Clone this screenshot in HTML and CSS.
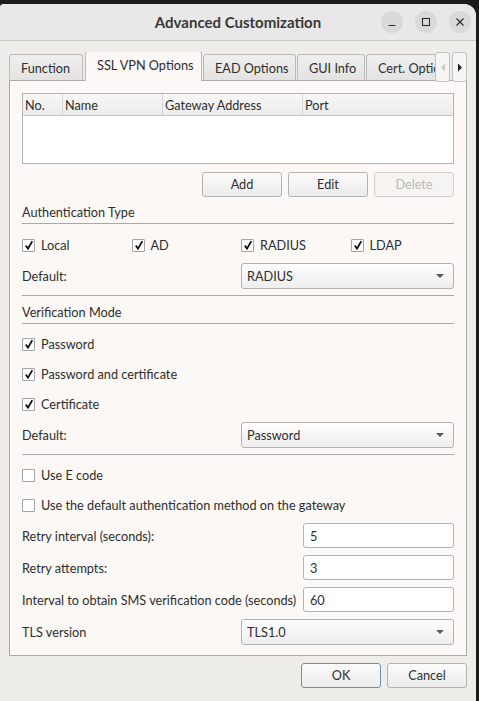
FILE: index.html
```html
<!DOCTYPE html>
<html lang="en">
<head>
    <meta charset="UTF-8">
    <title>Advanced Customization</title>
    <link rel="stylesheet" href="styles.css">
</head>
<body>
    <div class="window">
        <div class="titlebar">
            <span class="title">Advanced Customization</span>
            <div class="wbtns">
                <span class="wbtn"><svg width="10" height="10" viewBox="0 0 10 10"><path d="M1.5 8.5h7" stroke="#2e2e2e" stroke-width="1.2"/></svg></span>
                <span class="wbtn"><svg width="10" height="10" viewBox="0 0 10 10"><rect x="1.5" y="1.5" width="7" height="7" fill="none" stroke="#2e2e2e" stroke-width="1.1"/></svg></span>
                <span class="wbtn"><svg width="10" height="10" viewBox="0 0 10 10"><path d="M1.5 1.5l7 7M8.5 1.5l-7 7" stroke="#2e2e2e" stroke-width="1.2"/></svg></span>
            </div>
        </div>
        <div class="content">
            <div class="tabbar">
                <div class="tabs">
                    <span class="tab">Function</span>
                    <span class="tab active">SSL VPN Options</span>
                    <span class="tab">EAD Options</span>
                    <span class="tab">GUI Info</span>
                    <span class="tab">Cert. Options</span>
                </div>
                <div class="scroller">
                    <span class="sbtn"><svg width="6" height="9" viewBox="0 0 6 9"><path d="M5 0.5v8L1 4.5z" fill="#c8c8c8"/></svg></span>
                    <span class="sbtn"><svg width="6" height="9" viewBox="0 0 6 9"><path d="M1 0.5v8l4-4z" fill="#1e1e1e"/></svg></span>
                </div>
            </div>
            <div class="pane">
                <div class="table">
                    <div class="thead">
                        <span class="c1">No.</span>
                        <span class="c2">Name</span>
                        <span class="c3">Gateway Address</span>
                        <span class="c4">Port</span>
                    </div>
                    <div class="tbody"></div>
                </div>
                <div class="btnrow">
                    <span class="btn">Add</span>
                    <span class="btn">Edit</span>
                    <span class="btn disabled">Delete</span>
                </div>

                <div class="heading">Authentication Type</div>
                <div class="checkgrid">
                    <label class="chk"><span class="box on"></span>Local</label>
                    <label class="chk"><span class="box on"></span>AD</label>
                    <label class="chk"><span class="box on"></span>RADIUS</label>
                    <label class="chk"><span class="box on"></span>LDAP</label>
                </div>
                <div class="row2">
                    <span>Default:</span>
                    <span class="combo">RADIUS</span>
                </div>

                <div class="heading second">Verification Mode</div>
                <div class="checklist">
                    <label class="chk"><span class="box on"></span>Password</label>
                    <label class="chk"><span class="box on"></span>Password and certificate</label>
                    <label class="chk"><span class="box on"></span>Certificate</label>
                </div>
                <div class="row2">
                    <span>Default:</span>
                    <span class="combo">Password</span>
                </div>

                <div class="checklist">
                    <label class="chk"><span class="box"></span>Use E code</label>
                    <label class="chk"><span class="box"></span>Use the default authentication method on the gateway</label>
                </div>
                <div class="fields">
                    <div class="field"><span>Retry interval (seconds):</span><span class="input">5</span></div>
                    <div class="field"><span>Retry attempts:</span><span class="input">3</span></div>
                    <div class="field"><span>Interval to obtain SMS verification code (seconds)</span><span class="input">60</span></div>
                    <div class="row2 last">
                        <span>TLS version</span>
                        <span class="combo">TLS1.0</span>
                    </div>
                </div>
            </div>
            <div class="footer">
                <span class="btn default">OK</span>
                <span class="btn">Cancel</span>
            </div>
        </div>
    </div>
</body>
</html>
```

FILE: styles.css
```css
body{
    margin: 0;
    background: #1b1b1b;
    font-family: Lato, "Noto Sans", sans-serif;
    font-size: 12.7px;
    color: #2e2e2e;
}
.window{
    margin: 4px 3px 0 0;
    height: 697px;
    background: #efedea;
    border-radius: 4px 12px 0 0;
    overflow: hidden;
}
.titlebar{
    height: 36px;
    background: #e8e8e8;
    border-bottom: 1px solid #c9c9c9;
    position: relative;
    display: flex;
    align-items: center;
    justify-content: center;
}
.title{
    font-weight: bold;
    font-size: 15px;
    color: #383838;
}
.wbtns{
    position: absolute;
    right: 5px;
    top: 7px;
    display: flex;
    gap: 12px;
}
.wbtn{
    width: 22px;
    height: 22px;
    border-radius: 50%;
    background: #d9d9d9;
    display: flex;
    align-items: center;
    justify-content: center;
}

.content{
    padding: 11px 9px 0 9px;
}
/* tabs */
.tabbar{
    height: 28px;
    position: relative;
}
.tabs{
    display: flex;
    align-items: flex-end;
    height: 29px;
    width: 427px;
    overflow: hidden;
    position: relative;
    z-index: 1;
}
.tab{
    flex: none;
    height: 25px;
    line-height: 26px;
    padding: 0 11px;
    margin-right: 1px;
    margin-bottom: 1px;
    border: 1px solid #bdbbb8;
    border-bottom: none;
    border-radius: 3px 3px 0 0;
    background: linear-gradient(#efefef, #e3e3e3);
    white-space: nowrap;
}
.tab:first-child{ width: 50px; }
.tab.active{
    height: 29px;
    line-height: 27px;
    margin-bottom: 0;
    margin-left: 1px;
    background: #fbf8f6;
    width: 93px;
}
.tabs .tab:nth-child(3){ width: 69px; }
.tabs .tab:nth-child(4){ width: 44px; }
.scroller{
    position: absolute;
    right: 0;
    top: 0;
    display: flex;
    gap: 2px;
    z-index: 2;
}
.sbtn{
    width: 13px;
    height: 28px;
    border: 1px solid #c4c2bf;
    border-radius: 3px;
    background: #f6f5f4;
    display: flex;
    align-items: center;
    justify-content: center;
}

.pane{
    background: #fbf8f6;
    border: 1px solid #acaaa7;
    padding: 12px 12px 10px 12px;
}
/* table */
.table{
    border: 1px solid #b6b4b1;
    background: #fff;
    height: 69px;
}
.thead{
    display: flex;
    height: 21px;
    line-height: 22px;
    background: linear-gradient(#f7f7f7, #ececec);
    border-bottom: 1px solid #c6c6c6;
}
.thead span{
    padding-left: 2px;
    border-right: 1px solid #d6d6d6;
}
.thead .c1{ width: 37px; }
.thead .c2{ width: 97px; }
.thead .c3{ width: 137px; }
.thead .c4{ flex: 1; border-right: none; }

.btnrow{
    display: flex;
    justify-content: flex-end;
    gap: 6px;
    margin-top: 8px;
}
.btn{
    width: 78px;
    height: 23px;
    line-height: 23px;
    text-align: center;
    border: 1px solid #b4b2af;
    border-radius: 3px;
    background: linear-gradient(#fbfbfb, #ececec);
}
.btn.disabled{
    color: #b9b9b9;
    border-color: #d2d0cd;
    background: #f6f4f2;
}
.btn.default{
    border-color: #6e8eb0;
}

.heading{
    padding-top: 5px;
    height: 21px;
    line-height: 21px;
    border-bottom: 1px solid #a9a9a9;
}
.heading.second{
    padding-top: 6px;
}
.chk{
    display: flex;
    align-items: center;
    gap: 6px;
    height: 30px;
}
.box{
    width: 11px;
    height: 11px;
    border: 1px solid #a4a4a4;
    background: #fff;
    border-radius: 1px;
    position: relative;
}
.box.on::after{
    content: "";
    position: absolute;
    left: 2px;
    top: 0;
    width: 8px;
    height: 10px;
    background: url("data:image/svg+xml,%3Csvg xmlns='http://www.w3.org/2000/svg' width='8' height='10'%3E%3Cpath d='M0.8 5.6L3 8.6L7.3 1.2' fill='none' stroke='%23111' stroke-width='1.8'/%3E%3C/svg%3E") no-repeat;
}
.checkgrid{
    display: grid;
    grid-template-columns: 1fr 1fr 1fr 1fr;
    column-gap: 6px;
    margin-top: 6px;
}
.checklist{
    margin-top: 5px;
}
.row2{
    display: grid;
    grid-template-columns: 1fr 1fr;
    column-gap: 6px;
    align-items: center;
    margin-top: 3px;
    padding-bottom: 6px;
    border-bottom: 1px solid #a9a9a9;
}
.row2.last{
    border-bottom: none;
    padding-bottom: 0;
    margin-top: 0;
}
.combo{
    height: 24px;
    line-height: 24px;
    padding: 0 24px 0 5px;
    border: 1px solid #b4b2af;
    border-radius: 3px;
    background: linear-gradient(#fdfdfd, #eeeeee);
    position: relative;
}
.combo::after{
    content: "";
    position: absolute;
    right: 9px;
    top: 10px;
    border-left: 4px solid transparent;
    border-right: 4px solid transparent;
    border-top: 4px solid #5a5a5a;
}
.fields{
    margin-top: 3px;
    display: flex;
    flex-direction: column;
    gap: 7px;
}
.field{
    display: flex;
    justify-content: space-between;
    align-items: center;
}
.input{
    width: 143px;
    height: 23px;
    line-height: 24px;
    padding-left: 6px;
    border: 1px solid #b4b2af;
    border-radius: 3px;
    background: #fff;
}

.footer{
    display: flex;
    justify-content: flex-end;
    gap: 6px;
    margin-top: 7px;
}
```
